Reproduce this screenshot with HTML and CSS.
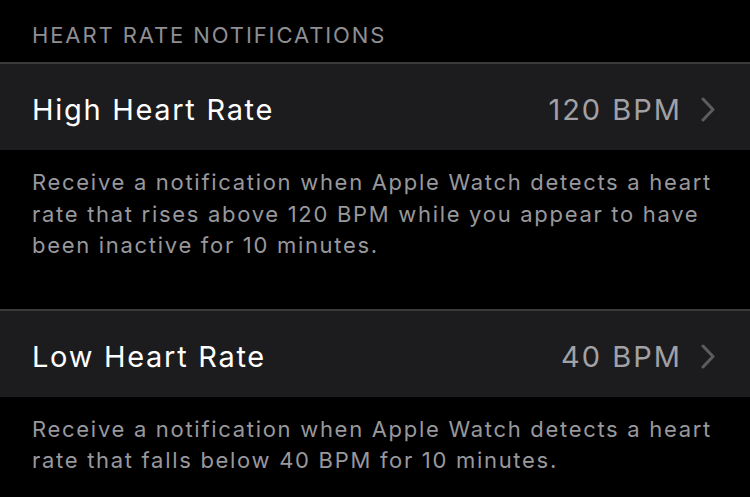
FILE: index.html
```html
<!DOCTYPE html>
<html lang="en">
<head>
  <meta charset="UTF-8">
  <meta name="viewport" content="width=device-width, initial-scale=1.0">
  <title>Heart Rate Notifications</title>
  <link rel="stylesheet" href="styles.css">
</head>
<body>
  <main class="settings">
    <h2 class="section-title">HEART RATE NOTIFICATIONS</h2>

    <a class="row" href="#">
      <span class="row-label">High Heart Rate</span>
      <span class="row-value">120 BPM</span>
      <svg class="chevron" width="14" height="25" viewBox="0 0 14 25">
        <polyline points="2,2 12,12.5 2,23" />
      </svg>
    </a>
    <p class="footnote">Receive a notification when Apple Watch detects a heart rate that rises above 120 BPM while you appear to have been inactive for 10 minutes.</p>

    <a class="row" href="#">
      <span class="row-label">Low Heart Rate</span>
      <span class="row-value">40 BPM</span>
      <svg class="chevron" width="14" height="25" viewBox="0 0 14 25">
        <polyline points="2,2 12,12.5 2,23" />
      </svg>
    </a>
    <p class="footnote">Receive a notification when Apple Watch detects a heart rate that falls below 40 BPM for 10 minutes.</p>
  </main>
</body>
</html>
```

FILE: styles.css
```css
* {
  margin: 0;
  padding: 0;
  box-sizing: border-box;
}
body {
  background-color: #000;
  font-family: Inter, "Noto Sans", sans-serif;
  color: #fff;
}
.settings {
  width: 750px;
}
.section-title {
  padding: 22px 32px 14px;
  font-size: 22px;
  font-weight: 400;
  line-height: 26px;
  letter-spacing: 1.9px;
  color: #8e8e93;
}
.row {
  display: flex;
  align-items: center;
  height: 88px;
  padding: 5px 35px 0 32px;
  border-top: 2px solid #3a3a3c;
  background-color: #1c1c1e;
  text-decoration: none;
}
.row-label {
  flex: 1;
  font-size: 29px;
  letter-spacing: 1.7px;
  color: #fff;
}
.row-value {
  font-size: 29px;
  letter-spacing: 2px;
  color: #a1a1a6;
}
.chevron {
  margin-left: 19px;
  fill: none;
  stroke: #5c5c60;
  stroke-width: 3;
  stroke-linecap: round;
  stroke-linejoin: round;
}
.footnote {
  padding: 17px 32px 47px;
  font-size: 22px;
  line-height: 31.6px;
  letter-spacing: 1.7px;
  color: #98989d;
}
.footnote:last-child {
  padding-bottom: 0;
}
```
